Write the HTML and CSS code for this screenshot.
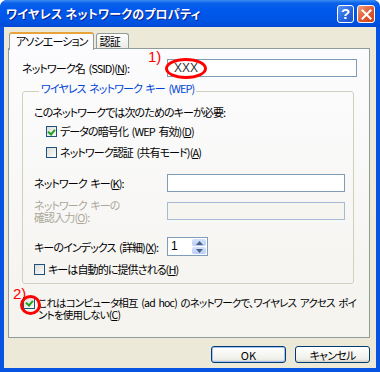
FILE: index.html
```html
<!DOCTYPE html>
<html lang="ja">
<head>
<meta charset="UTF-8">
<meta name="viewport" content="width=device-width, initial-scale=1.0">
<title>ワイヤレス ネットワークのプロパティ</title>
<link rel="stylesheet" href="styles.css">
</head>
<body>

<div class="window">
    <div class="titlebar">
        <span class="title">ワイヤレス ネットワークのプロパティ</span>
        <div class="caption-buttons">
            <span class="cap help">?</span>
            <span class="cap close">
                <svg width="11" height="11" viewBox="0 0 11 11"><path d="M1.5 1.5 L9.5 9.5 M9.5 1.5 L1.5 9.5" stroke="#fff" stroke-width="2" stroke-linecap="square"/></svg>
            </span>
        </div>
    </div>

    <div class="client">
        <div class="tabs">
            <div class="tab active">アソシエーション</div>
            <div class="tab">認証</div>
        </div>

        <div class="panel">
            <div class="ssid-row">
                <span class="label">ネットワーク名 (SSID)(<u>N</u>):</span>
                <div class="textbox ssid">XXX</div>
            </div>

            <fieldset class="group">
                <legend>ワイヤレス ネットワーク キー (WEP)</legend>
                <p class="note">このネットワークでは次のためのキーが必要:</p>
                <div class="check indent">
                    <span class="box checked"></span>
                    <span>データの暗号化 (WEP 有効)(<u>D</u>)</span>
                </div>
                <div class="check indent second">
                    <span class="box"></span>
                    <span>ネットワーク認証 (共有モード)(<u>A</u>)</span>
                </div>

                <div class="field key-row">
                    <span class="label">ネットワーク キー(<u>K</u>):</span>
                    <div class="textbox"></div>
                </div>
                <div class="field confirm-row">
                    <span class="label disabled">ネットワーク キーの<br>確認入力(<u>O</u>):</span>
                    <div class="textbox off"></div>
                </div>
                <div class="field index-row">
                    <span class="label">キーのインデックス (詳細)(<u>X</u>):</span>
                    <div class="spinner">
                        <span class="value">1</span>
                        <div class="spin-buttons">
                            <span class="spin"><svg width="7" height="4" viewBox="0 0 7 4"><path d="M0 4 L3.5 0 L7 4 Z" fill="#4d6185"/></svg></span>
                            <span class="spin"><svg width="7" height="4" viewBox="0 0 7 4"><path d="M0 0 L3.5 4 L7 0 Z" fill="#4d6185"/></svg></span>
                        </div>
                    </div>
                </div>
                <div class="check auto">
                    <span class="box"></span>
                    <span>キーは自動的に提供される(<u>H</u>)</span>
                </div>
            </fieldset>

            <div class="check adhoc">
                <span class="box checked"></span>
                <span class="adhoc-text">これはコンピュータ相互 (ad hoc) のネットワークで、ワイヤレス アクセス ポイ<br>ントを使用しない(<u>C</u>)</span>
            </div>

            <!-- red annotations drawn over the dialog -->
            <span class="mark mark-1">1)</span>
            <span class="ring ring-1"></span>
            <span class="mark mark-2">2)</span>
            <span class="ring ring-2"></span>
        </div>

        <div class="actions">
            <button type="button" class="default">OK</button>
            <button type="button">キャンセル</button>
        </div>
    </div>
</div>

</body>
</html>
```

FILE: styles.css
```css
body {
    margin: 0;
    padding: 0;
    font-family: "Noto Sans CJK JP", "Liberation Sans", sans-serif;
    font-size: 11px;
    line-height: 12px;
    letter-spacing: -0.9px;
    word-spacing: 2px;
    font-feature-settings: "palt";
    color: #000;
    background-color: #fff;
}
.window {
    width: 380px;
    height: 372px;
    box-sizing: border-box;
    background-color: #0854e2;
    display: flex;
    flex-direction: column;
    border-radius: 7px 7px 0 0;
    overflow: hidden;
}
.titlebar {
    height: 27px;
    display: flex;
    align-items: center;
    padding: 0 5px 0 6px;
    background: linear-gradient(#3c8ef3 0, #0a62e8 3px, #0058ee 9px, #0055e5 20px, #0149d6 27px);
}
.title {
    color: #fff;
    font-weight: bold;
    font-size: 12px;
    text-shadow: 1px 1px 0 #0a1e8c;
    letter-spacing: 0.2px;
    word-spacing: 0;
}
.caption-buttons {
    margin-left: auto;
    display: flex;
    gap: 3px;
    margin-top: 1px;
}
.cap {
    width: 17px;
    height: 18px;
    box-sizing: border-box;
    border: 1px solid #fff;
    border-radius: 3px;
    display: flex;
    align-items: center;
    justify-content: center;
}
.help {
    background: linear-gradient(135deg, #5a93f5, #2463de 60%, #1b52c9);
    color: #fff;
    font-family: "Liberation Sans", sans-serif;
    font-weight: bold;
    font-size: 15px;
    letter-spacing: 0;
}
.close {
    width: 18px;
    background: linear-gradient(135deg, #f09e7f, #e1582d 55%, #c8431f);
}
.client {
    flex: 1;
    margin: 0 4px 4px 4px;
    background-color: #ece9d8;
    padding: 4px 6px 0 4px;
}
.tabs {
    display: flex;
    align-items: flex-end;
    height: 17px;
    padding-left: 1px;
}
.tab {
    height: 14px;
    padding: 0 8px 0 3px;
    margin-left: 2px;
    border: 1px solid #919b9c;
    border-bottom: none;
    border-radius: 3px 3px 0 0;
    background: linear-gradient(#fefefe, #ecebe6);
    line-height: 14px;
}
.tab.active {
    height: 16px;
    margin-left: 0;
    padding: 0 5px 0 6px;
    background: #fcfcfe;
    border-top: 2px solid #e8a33a;
    position: relative;
    top: 1px;
    margin-bottom: -1px;
    z-index: 1;
    line-height: 15px;
}
.panel {
    position: relative;
    height: 290px;
    box-sizing: border-box;
    border: 1px solid #919b9c;
    background: linear-gradient(#fcfcfe, #f4f3ee);
    padding: 10px 14px 0 13px;
}
.ssid-row {
    display: flex;
    align-items: center;
    justify-content: space-between;
    height: 18px;
}
.textbox {
    height: 18px;
    box-sizing: border-box;
    border: 1px solid #7f9db9;
    background: #fff;
    font-family: "Liberation Sans", sans-serif;
    font-size: 12px;
    line-height: 16px;
    letter-spacing: 0;
    padding-left: 4px;
}
.textbox.ssid {
    width: 190px;
    margin-right: -2px;
    padding-left: 6px;
    color: #333;
}
.textbox.off {
    background: #f6f5f0;
    border-color: #a7bad3;
}
.group {
    margin: 5px 1px 0 0;
    padding: 6px 8px 8px 11px;
    border: 1px solid #d0d0bf;
    border-radius: 3px;
    min-width: 0;
}
.group legend {
    color: #0046d5;
    padding: 0 2px 6px 2px;
    margin-left: 5px;
    line-height: 12px;
}
.note {
    margin: 0;
}
.check {
    display: flex;
    align-items: center;
    gap: 3px;
}
.check.indent {
    margin: 7px 0 0 12px;
}
.check.indent.second {
    margin-top: 9px;
}
.box {
    width: 11px;
    height: 11px;
    flex-shrink: 0;
    box-sizing: border-box;
    border: 1px solid #1c5180;
    background: linear-gradient(135deg, #dcdcd7, #fbfbf9);
    position: relative;
}
.box.checked::after {
    content: "";
    position: absolute;
    left: 2px;
    top: 1px;
    width: 3px;
    height: 5px;
    border: solid #21a121;
    border-width: 0 2px 2px 0;
    transform: rotate(40deg);
}
.field {
    display: grid;
    grid-template-columns: 133px 178px;
    align-items: center;
}
.key-row {
    margin-top: 16px;
}
.confirm-row {
    margin-top: 7px;
}
.index-row {
    margin-top: 14px;
}
.label.disabled {
    color: #aca899;
}
.spinner {
    width: 41px;
    height: 19px;
    box-sizing: border-box;
    border: 1px solid #7f9db9;
    background: #fff;
    display: flex;
    justify-content: space-between;
}
.spinner .value {
    font-family: "Liberation Sans", sans-serif;
    font-size: 12px;
    line-height: 17px;
    letter-spacing: 0;
    padding-left: 3px;
}
.spin-buttons {
    width: 14px;
    display: flex;
    flex-direction: column;
    gap: 1px;
    padding: 1px 1px 1px 0;
}
.spin {
    flex: 1;
    background: linear-gradient(#d4e1fc, #b8cdf8);
    border-radius: 2px;
    display: flex;
    align-items: center;
    justify-content: center;
}
.check.auto {
    margin-top: 7px;
}
.check.adhoc {
    margin: 13px 0 0 1px;
    align-items: flex-start;
    gap: 3px;
    white-space: nowrap;
}
.adhoc-text {
    font-size: 10.5px;
    letter-spacing: -0.8px;
    word-spacing: 2px;
}
.check.adhoc .box {
    width: 12px;
    height: 12px;
}
.check.adhoc .box.checked::after {
    left: 3px;
    top: 1px;
}
.actions {
    display: flex;
    justify-content: flex-end;
    gap: 9px;
    margin-top: 8px;
}
button {
    width: 75px;
    height: 17px;
    border: 1px solid #003c74;
    border-radius: 3px;
    background: linear-gradient(#ffffff, #f0f0ea 80%, #d6d0c5);
    font-family: "Noto Sans CJK JP", sans-serif;
    font-feature-settings: "palt";
    font-size: 11px;
    line-height: 12px;
    letter-spacing: -0.8px;
    padding: 0;
    color: #000;
}
button.default {
    box-shadow: inset 0 0 0 1px #a6c3f5;
    letter-spacing: 0;
}
.mark {
    position: absolute;
    color: #f00;
    font-size: 15px;
    line-height: 15px;
    font-family: "Liberation Sans", sans-serif;
    letter-spacing: 0;
}
.mark-1 {
    left: 139px;
    top: 0px;
}
.mark-2 {
    left: 4px;
    top: 237px;
}
.ring {
    position: absolute;
    box-sizing: border-box;
    border: 3px solid #f00;
    border-radius: 50%;
}
.ring-1 {
    left: 156px;
    top: 9px;
    width: 42px;
    height: 21px;
}
.ring-2 {
    left: 11px;
    top: 246px;
    width: 21px;
    height: 20px;
}
```
